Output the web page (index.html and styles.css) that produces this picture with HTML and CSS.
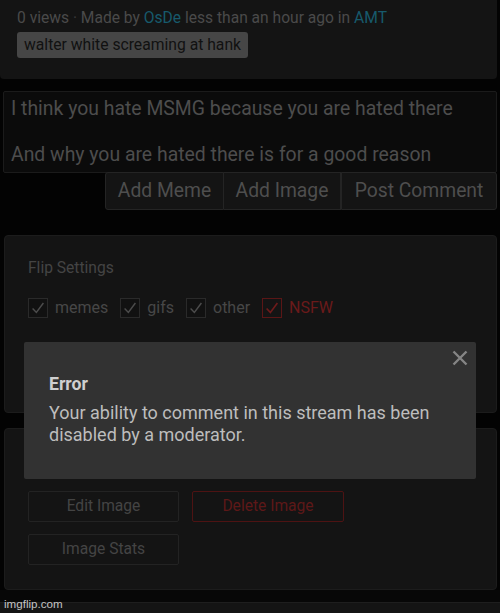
FILE: index.html
```html
<!DOCTYPE html>
<html>
<head>
<meta charset="utf-8">
<link rel="stylesheet" href="styles.css">
</head>
<body>
<div class="page">
  <div class="top-card">
    <div class="meta">0 views <span class="dot">·</span> Made by <span class="link">OsDe</span> less than an hour ago in <span class="link">AMT</span></div>
    <div class="tag">walter white screaming at hank</div>
  </div>

  <div class="comment-box">
    <div class="comment-text">I think you hate MSMG because you are hated there<br><br>And why you are hated there is for a good reason</div>
  </div>
  <div class="comment-actions">
    <div class="btn b1">Add Meme</div>
    <div class="btn b2">Add Image</div>
    <div class="btn b3">Post Comment</div>
  </div>

  <div class="panel flip">
    <div class="panel-title">Flip Settings</div>
    <div class="checks">
      <div class="check"><span class="box"><svg viewBox="0 0 20 20" width="20" height="20"><path d="M4 10.5 L8.2 15 L16 4.5" fill="none" stroke="#4c4c4c" stroke-width="1.6"/></svg></span><span class="lbl">memes</span></div>
      <div class="check"><span class="box"><svg viewBox="0 0 20 20" width="20" height="20"><path d="M4 10.5 L8.2 15 L16 4.5" fill="none" stroke="#4c4c4c" stroke-width="1.6"/></svg></span><span class="lbl">gifs</span></div>
      <div class="check"><span class="box"><svg viewBox="0 0 20 20" width="20" height="20"><path d="M4 10.5 L8.2 15 L16 4.5" fill="none" stroke="#4c4c4c" stroke-width="1.6"/></svg></span><span class="lbl">other</span></div>
      <div class="check red"><span class="box"><svg viewBox="0 0 20 20" width="20" height="20"><path d="M4 10.5 L8.2 15 L16 4.5" fill="none" stroke="#6e1b1b" stroke-width="1.8"/></svg></span><span class="lbl">NSFW</span></div>
    </div>
  </div>

  <div class="panel actions">
    <div class="action-grid">
      <div class="abtn">Edit Image</div>
      <div class="abtn danger">Delete Image</div>
      <div class="abtn">Image Stats</div>
    </div>
  </div>

  <div class="footer-strip"></div>
  <div class="footer-band"></div>

  <div class="watermark">imgflip.com</div>

  <div class="modal">
    <div class="close">
      <svg viewBox="0 0 16 16" width="16" height="16"><path d="M1.5 1.5 L14.5 14.5 M14.5 1.5 L1.5 14.5" stroke="#858585" stroke-width="2.4" fill="none"/></svg>
    </div>
    <div class="modal-title">Error</div>
    <div class="modal-body">Your ability to comment in this stream has been disabled by a moderator.</div>
  </div>
</div>
</body>
</html>
```

FILE: styles.css
```css
html, body {
  margin: 0;
  padding: 0;
  background: #030303;
}
body {
  font-family: Roboto, "Liberation Sans", sans-serif;
  width: 500px;
  height: 613px;
  overflow: hidden;
}
.page {
  position: relative;
  width: 500px;
  height: 613px;
  display: flex;
  flex-direction: column;
}
.top-card {
  width: 497px;
  height: 79px;
  box-sizing: border-box;
  background: #141414;
  border-radius: 0 0 4px 4px;
  padding: 8px 0 0 17px;
  display: flex;
  flex-direction: column;
  align-items: flex-start;
  gap: 4px;
}
.meta {
  font-size: 15.6px;
  line-height: 20px;
  color: #4a4a4a;
}
.meta .dot { color: #3a3a3a; }
.meta .link { color: #175a6c; }
.tag {
  background: #464646;
  color: #111;
  font-size: 15.7px;
  line-height: 26px;
  height: 26px;
  padding: 0 7px;
  border-radius: 3px;
}
.comment-box {
  margin: 12px 0 0 3px;
  width: 494px;
  height: 82px;
  box-sizing: border-box;
  background: #0b0b0b;
  border: 1px solid #1b1b1b;
  border-radius: 2px;
  padding: 5px 0 0 7px;
}
.comment-text {
  font-size: 19.4px;
  line-height: 23px;
  color: #4d4d4d;
}
.comment-actions {
  display: flex;
  justify-content: flex-end;
  width: 497px;
  margin-top: -1px;
}
.btn {
  height: 38px;
  box-sizing: border-box;
  background: #141414;
  border: 1px solid #242424;
  color: #4e4e4e;
  font-size: 19.3px;
  line-height: 36px;
  text-align: center;
}
.b1 { width: 119px; border-radius: 3px 0 0 3px; }
.b2 { width: 117px; border-left: none; }
.b3 { width: 156px; border-left: 1px solid #242424; border-radius: 0 3px 3px 0; }
.panel {
  background: #141414;
  border: 1px solid #1c1c1c;
  border-radius: 4px;
  box-sizing: border-box;
  margin-left: 4px;
  width: 493px;
}
.flip {
  margin-top: 25px;
  height: 178px;
  padding: 23px 0 0 23px;
}
.panel-title {
  font-size: 15.6px;
  line-height: 19px;
  color: #444;
}
.checks {
  display: flex;
  gap: 12px;
  margin-top: 20px;
}
.check {
  display: flex;
  align-items: center;
  gap: 7px;
}
.box {
  width: 20px;
  height: 20px;
  box-sizing: border-box;
  border: 1px solid #2a2a2a;
  background: #111;
  display: flex;
  align-items: center;
  justify-content: center;
}
.box svg { display: block; }
.lbl {
  font-size: 16px;
  color: #474747;
  line-height: 20px;
}
.check.red .box { border-color: #5a1616; background: #141414; }
.check.red .lbl { color: #6a1a1a; }
.actions {
  margin-top: 15px;
  height: 162px;
  padding: 62px 0 0 23px;
}
.action-grid {
  display: grid;
  grid-template-columns: 151px 152px;
  column-gap: 13px;
  row-gap: 12px;
}
.abtn {
  height: 31px;
  box-sizing: border-box;
  border: 1px solid #232323;
  border-radius: 2px;
  color: #444;
  font-size: 15.6px;
  line-height: 29px;
  text-align: center;
  background: #141414;
}
.abtn.danger {
  border-color: #4e1313;
  color: #5e1818;
}
.footer-strip {
  height: 12px;
  background: #070707;
}
.footer-band {
  flex: 1;
  background: #141414;
  border-top: 1px solid #1e1e1e;
}
.watermark {
  position: absolute;
  left: 4px;
  top: 596px;
  font-size: 11.6px;
  line-height: 15px;
  color: #c4c4c4;
  font-family: "Liberation Sans", Arial, sans-serif;
}
.modal {
  position: absolute;
  left: 24px;
  top: 342px;
  width: 452px;
  height: 137px;
  box-sizing: border-box;
  background: #323232;
  border-radius: 2px;
  padding: 32px 0 0 25px;
}
.close {
  position: absolute;
  right: 8px;
  top: 8px;
}
.close svg { display: block; }
.modal-title {
  font-size: 17.6px;
  font-weight: bold;
  color: #cfcfcf;
  line-height: 21px;
}
.modal-body {
  margin-top: 7px;
  font-size: 18px;
  line-height: 22px;
  color: #bdbdbd;
  width: 410px;
}
```
